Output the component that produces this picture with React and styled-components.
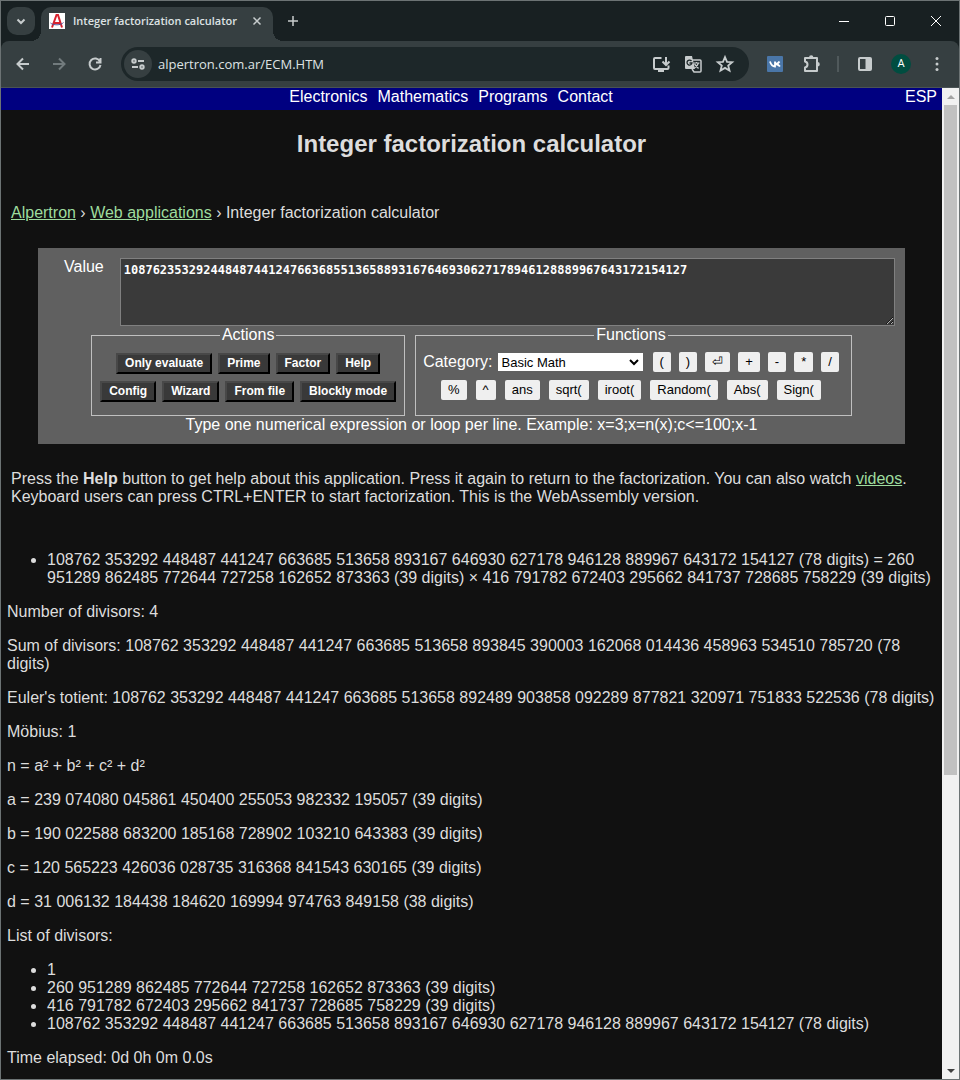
import React from "react";
import styled, { createGlobalStyle, css } from "styled-components";

const Global = createGlobalStyle`
  * { box-sizing: border-box; }
  body { margin: 0; background: #111; }
  button, select, textarea { margin: 0; }
  svg { flex: none; }
`;

const sans = `"Liberation Sans", Arial, sans-serif`;
const ui = `"Open Sans", "Noto Sans", sans-serif`;

const Frame = styled.div`
  display: flex;
  flex-direction: column;
  min-height: 100vh;
  border: 1px solid #6c7374;
  background: #111;
  font: 16px/18px ${sans};
  color: #ddd;
`;

const TabStrip = styled.div`
  display: flex;
  align-items: center;
  height: 40px;
  padding: 0 16px 0 6px;
  background: #182022;
`;

const IconButton = styled.button`
  display: flex;
  align-items: center;
  justify-content: center;
  flex: none;
  width: 28px;
  height: 28px;
  padding: 0;
  border: 0;
  border-radius: ${(p) => p.$radius || 14}px;
  background: ${(p) => p.$bg || "transparent"};
  color: ${(p) => p.$color || "#c7cccd"};
`;

const Tab = styled.div`
  position: relative;
  display: flex;
  align-items: center;
  align-self: flex-end;
  width: 232px;
  height: 34px;
  margin-left: 6px;
  margin-right: 6px;
  padding: 0 2px 6px 8px;
  border-radius: 10px 10px 0 0;
  background: #363f41;
  &::before, &::after {
    content: "";
    position: absolute;
    bottom: 0;
    width: 10px;
    height: 10px;
  }
  &::before {
    left: -10px;
    background: radial-gradient(circle at 0 0, transparent 10px, #363f41 10px);
  }
  &::after {
    right: -10px;
    background: radial-gradient(circle at 100% 0, transparent 10px, #363f41 10px);
  }
`;

const TabTitle = styled.span`
  flex: 1;
  margin-left: 8px;
  font: 600 11px/16px ${ui};
  color: #dde2e3;
  white-space: nowrap;
`;

const WindowControls = styled.div`
  display: flex;
  gap: 18px;
  margin-left: auto;
  margin-right: -7px;
`;

const Toolbar = styled.div`
  display: flex;
  align-items: center;
  height: 47px;
  padding: 0 8px;
  border-bottom: 1px solid #4a5355;
  border-radius: 8px 8px 0 0;
  background: #363f41;
`;

const ToolbarBack = styled.div`
  background: #182022;
`;

const NavButtons = styled.div`
  display: flex;
  gap: 8px;
  margin-right: 12px;
`;

const Omnibox = styled.div`
  display: flex;
  align-items: center;
  flex: 1;
  height: 34px;
  padding: 0 10px 0 3px;
  border-radius: 17px;
  background: #1d2729;
`;

const Address = styled.input`
  flex: 1;
  min-width: 0;
  margin-left: 6px;
  padding: 0;
  border: 0;
  outline: 0;
  background: transparent;
  font: 13px/20px ${ui};
  color: #dfe3e4;
`;

const BoxIcons = styled.div`
  display: flex;
  gap: 4px;
`;

const Extensions = styled.div`
  display: flex;
  align-items: center;
  gap: 8px;
  margin-left: 12px;
`;

const Divider = styled.span`
  width: 2px;
  height: 16px;
  margin: 0 4px;
  background: #50595b;
`;

const Avatar = styled.span`
  display: flex;
  align-items: center;
  justify-content: center;
  width: 20px;
  height: 20px;
  border-radius: 50%;
  background: #004d40;
  font: 11px/20px Roboto, sans-serif;
  color: #fff;
`;

const Viewport = styled.div`
  display: flex;
  flex: 1;
`;

const Page = styled.div`
  flex: 1;
  min-width: 0;
`;

const ScrollBar = styled.div`
  display: flex;
  flex-direction: column;
  flex: none;
  width: 17px;
  background: #f1f1f1;
`;

const ScrollArrow = styled.button`
  display: flex;
  align-items: center;
  justify-content: center;
  width: 17px;
  height: 17px;
  padding: 0;
  border: 0;
  background: transparent;
  color: ${(p) => (p.$off ? "#a3a3a3" : "#404040")};
`;

const Track = styled.div`
  flex: 1;
  padding: 0 2px;
`;

const Thumb = styled.div`
  height: 70%;
  background: #c1c1c1;
`;

const SiteNav = styled.nav`
  display: flex;
  height: 22px;
  padding-right: 5px;
  background: #000080;
`;

const NavList = styled.div`
  display: flex;
  flex: 1;
  justify-content: center;
  gap: 10px;
  padding-right: 4px;
`;

const NavLink = styled.a`
  color: #fff;
  text-decoration: none;
`;

const Title = styled.h1`
  margin: 20px 0 47px;
  font: bold 24px/27px ${sans};
  text-align: center;
`;

const Crumbs = styled.div`
  margin-left: 10px;
`;

const Link = styled.a`
  color: #9edc9e;
  text-decoration: underline;
`;

const Form = styled.form`
  margin: 26px 37px;
  padding: 10px 10px 10px 26px;
  background: #606060;
  color: #fff;
`;

const ValueRow = styled.div`
  display: flex;
  gap: 16px;
`;

const ValueBox = styled.textarea`
  display: block;
  flex: 1;
  height: 68px;
  padding: 4px 3px;
  border: 1px solid #808080;
  outline: 0;
  background: #3a3a3a;
  color: #fff;
  font: bold 12px/15px "DejaVu Sans Mono", monospace;
  resize: vertical;
`;

const Groups = styled.div`
  display: flex;
  justify-content: center;
  gap: 10px;
  padding-right: 16px;
`;

const Group = styled.fieldset`
  min-width: 0;
  height: 90px;
  margin: 0;
  padding: ${(p) => (p.$keys ? "8px 12px 0 7px" : "9px 8px 0")};
  border: 1px solid #c0c0c0;
`;

const Legend = styled.legend`
  margin: 0 auto;
  padding: 0 2px;
  text-align: center;
`;

const Row = styled.div`
  display: flex;
  align-items: center;
  justify-content: center;
  gap: ${(p) => p.$gap}px;
  height: 20px;
  margin-bottom: 8px;
`;

const buttonBase = css`
  font-family: ${sans};
  font-size: 13px;
  line-height: 16px;
  white-space: nowrap;
`;

const ActionButton = styled.button`
  ${buttonBase}
  height: 21px;
  padding: 0 7px;
  border: 2px solid;
  border-color: #484848 #000 #000 #484848;
  background: #393939;
  color: #fff;
  font-size: 12px;
  font-weight: bold;
`;

const KeyButton = styled.button`
  ${buttonBase}
  height: 20px;
  padding: 0 7px;
  border: 0;
  border-radius: 2px;
  background: #efefef;
  color: #000;
`;

const Category = styled.label`
  display: flex;
  align-items: center;
  gap: 5px;
  margin-right: 2px;
`;

const SelectWrap = styled.span`
  position: relative;
  display: flex;
  color: #000;
  svg { position: absolute; right: 4px; top: 5px; pointer-events: none; }
`;

const Select = styled.select`
  ${buttonBase}
  appearance: none;
  width: 145px;
  height: 18px;
  padding: 1px 4px 0;
  border: 0;
  border-radius: 0;
  background: #fff;
  color: #000;
`;

const Hint = styled.div`
  padding-right: 16px;
  text-align: center;
`;

const Intro = styled.p`
  margin: 0 10px 45px;
`;

const Results = styled.div`
  padding: 0 6px;
  p { margin: 16px 0; }
  ul { margin: 16px 0; padding-left: 40px; }
  p:last-child { margin-bottom: 10px; }
`;

function Icon({ size = 20, children, w = 2 }) {
  return (
    <svg width={size} height={size} viewBox={`0 0 ${size} ${size}`} fill="none" stroke="currentColor" strokeWidth={w} aria-hidden="true">
      {children}
    </svg>
  );
}

const Favicon = () => (
  <svg width="16" height="16" viewBox="0 0 16 16" aria-hidden="true">
    <rect width="16" height="16" fill="#fff" />
    <path d="M3 14.500L7.500 2h1.500L13 14.500M5 10h6.500" fill="none" stroke="#d8232f" strokeWidth="2" />
    <path d="M1.500 10C4 12.500 12 12.500 14.500 9.500" fill="none" stroke="#55539a" strokeWidth="1" />
  </svg>
);

const InstallIcon = () => (
  <Icon>
    <path d="M10.500 4H4Q3 4 3 5v9q0 1 1 1h12.500q1 0 1-1v-2.500M15 3v7M11.500 7.500L15 11l3.500-3.500" />
    <path d="M7 15h6v3H7z" fill="currentColor" stroke="none" />
  </Icon>
);

const TranslateIcon = () => (
  <svg width="20" height="20" viewBox="0 0 20 20" aria-hidden="true">
    <path d="M3 2h6l3 13H3q-1 0-1-1V3q0-1 1-1z" fill="#c7cccd" />
    <path d="M9 6h8q1 0 1 1v10q0 1-1 1h-6l-2-3" fill="none" stroke="#c7cccd" strokeWidth="1.500" />
    <path d="M8.500 7A2.500 2.500 0 1 0 9 9H6.500" fill="none" stroke="#1d2729" strokeWidth="1.300" />
    <path d="M10.500 9h6M13.500 8v1M15.500 9q-1 3-4 5M11.500 10l4 4.500" fill="none" stroke="#c7cccd" strokeWidth="1.200" />
  </svg>
);

const PuzzleIcon = () => (
  <svg width="20" height="20" viewBox="0 0 20 20" aria-hidden="true">
    <path d="M4 4h12v13H4v-3.500q2.500-.5 2.500-3T4 7.500z" fill="none" stroke="#c7cccd" strokeWidth="2" strokeLinejoin="round" />
    <path d="M8 3.500a2.200 2.200 0 0 1 4.400 0zM16.500 8a2.300 2.300 0 0 1 0 4.600z" fill="#c7cccd" />
  </svg>
);

const VkIcon = () => (
  <svg width="16" height="16" viewBox="0 0 16 16" aria-hidden="true">
    <rect width="16" height="16" rx="1" fill="#4a76a8" />
    <path d="M3 5.500q1.500 5 5 5v-5M8 8q3 0 4.500-2.500M8.500 8q3 .5 4.500 2.500" fill="none" stroke="#fff" strokeWidth="1.800" />
  </svg>
);

const actions = [
  ["Only evaluate", "Prime", "Factor", "Help"],
  ["Config", "Wizard", "From file", "Blockly mode"],
];
const keysTop = ["(", ")", "⏎", "+", "-", "*", "/"];
const keysBottom = ["%", "^", "ans", "sqrt(", "iroot(", "Random(", "Abs(", "Sign("];
const P1 = "260 951289 862485 772644 727258 162652 873363 (39 digits)";
const P2 = "416 791782 672403 295662 841737 728685 758229 (39 digits)";
const N = "108762 353292 448487 441247 663685 513658 893167 646930 627178 946128 889967 643172 154127 (78 digits)";
const facts = [
  "Number of divisors: 4",
  "Sum of divisors: 108762 353292 448487 441247 663685 513658 893845 390003 162068 014436 458963 534510 785720 (78 digits)",
  "Euler's totient: 108762 353292 448487 441247 663685 513658 892489 903858 092289 877821 320971 751833 522536 (78 digits)",
  "Möbius: 1",
  "n = a² + b² + c² + d²",
  "a = 239 074080 045861 450400 255053 982332 195057 (39 digits)",
  "b = 190 022588 683200 185168 728902 103210 643383 (39 digits)",
  "c = 120 565223 426036 028735 316368 841543 630165 (39 digits)",
  "d = 31 006132 184438 184620 169994 974763 849158 (38 digits)",
  "List of divisors:",
];

function Browser() {
  return (
    <>
      <TabStrip>
        <IconButton aria-label="Search tabs" $bg="#363f41" $radius={10}>
          <Icon size={12}><path d="M2.500 4.500L6 8l3.500-3.500" /></Icon>
        </IconButton>
        <Tab>
          <Favicon />
          <TabTitle>Integer factorization calculator</TabTitle>
          <IconButton aria-label="Close tab">
            <Icon size={10} w={1.5}><path d="M1.500 1.500l7 7M8.500 1.500l-7 7" /></Icon>
          </IconButton>
        </Tab>
        <IconButton aria-label="New tab">
          <Icon size={12} w={1.5}><path d="M6 1v10M1 6h10" /></Icon>
        </IconButton>
        <WindowControls>
          <IconButton aria-label="Minimize" $color="#fff"><Icon size={10} w={1}><path d="M0 5.500h10" /></Icon></IconButton>
          <IconButton aria-label="Maximize" $color="#fff"><Icon size={10} w={1}><rect x="0.500" y="0.500" width="9" height="9" rx="1" /></Icon></IconButton>
          <IconButton aria-label="Close" $color="#fff"><Icon size={10} w={1}><path d="M0 0l10 10M10 0L0 10" /></Icon></IconButton>
        </WindowControls>
      </TabStrip>
      <ToolbarBack>
        <Toolbar>
          <NavButtons>
            <IconButton aria-label="Back"><Icon size={16}><path d="M14 8H3M8 2.500L2.500 8 8 13.500" /></Icon></IconButton>
            <IconButton aria-label="Forward" $color="#727b7d"><Icon size={16}><path d="M2 8h11M8 2.500L13.500 8 8 13.500" /></Icon></IconButton>
            <IconButton aria-label="Reload"><Icon size={16}><path d="M13 5.500A5.500 5.500 0 1 0 13.500 9M13.500 2v4.500H9" /></Icon></IconButton>
          </NavButtons>
          <Omnibox>
            <IconButton aria-label="Site information" $bg="#363f41">
              <Icon size={14}><circle cx="3" cy="4" r="1.700" /><path d="M7 4h6M1 10h6" /><circle cx="11" cy="10" r="1.700" /></Icon>
            </IconButton>
            <Address aria-label="Address" defaultValue="alpertron.com.ar/ECM.HTM" />
            <BoxIcons>
              <IconButton aria-label="Install"><InstallIcon /></IconButton>
              <IconButton aria-label="Translate"><TranslateIcon /></IconButton>
              <IconButton aria-label="Bookmark">
                <Icon w={1.8}><path d="M10 3l2 4.800 5.200.4-4 3.400 1.300 5L10 13.900l-4.500 2.700 1.300-5-4-3.400L8 7.800z" /></Icon>
              </IconButton>
            </BoxIcons>
          </Omnibox>
          <Extensions>
            <IconButton aria-label="VK"><VkIcon /></IconButton>
            <IconButton aria-label="Extensions"><PuzzleIcon /></IconButton>
            <Divider />
            <IconButton aria-label="Side panel">
              <Icon size={16}><rect x="2" y="2" width="12" height="12" rx="1" /><path d="M8.500 2h5v12h-5z" fill="currentColor" stroke="none" /></Icon>
            </IconButton>
            <IconButton aria-label="Profile"><Avatar>A</Avatar></IconButton>
            <IconButton aria-label="Menu">
              <Icon size={16}><g fill="currentColor" stroke="none"><circle cx="8" cy="2.500" r="1.500" /><circle cx="8" cy="8" r="1.500" /><circle cx="8" cy="13.500" r="1.500" /></g></Icon>
            </IconButton>
          </Extensions>
        </Toolbar>
      </ToolbarBack>
    </>
  );
}

function Calculator() {
  return (
    <Form onSubmit={(e) => e.preventDefault()}>
      <ValueRow>
        <label htmlFor="value">Value</label>
        <ValueBox id="value" spellCheck={false} defaultValue="108762353292448487441247663685513658893167646930627178946128889967643172154127" />
      </ValueRow>
      <Groups>
        <Group>
          <Legend>Actions</Legend>
          {actions.map((row) => (
            <Row key={row[0]} $gap={6}>
              {row.map((a) => <ActionButton type="button" key={a}>{a}</ActionButton>)}
            </Row>
          ))}
        </Group>
        <Group $keys>
          <Legend>Functions</Legend>
          <Row $gap={8}>
            <Category>
              Category:
              <SelectWrap>
                <Select defaultValue="Basic Math"><option>Basic Math</option></Select>
                <Icon size={10}><path d="M1 2l4 4 4-4" /></Icon>
              </SelectWrap>
            </Category>
            {keysTop.map((k) => <KeyButton type="button" key={k}>{k}</KeyButton>)}
          </Row>
          <Row $gap={9}>
            {keysBottom.map((k) => <KeyButton type="button" key={k}>{k}</KeyButton>)}
          </Row>
        </Group>
      </Groups>
      <Hint>Type one numerical expression or loop per line. Example: x=3;x=n(x);c&lt;=100;x-1</Hint>
    </Form>
  );
}

export default function App() {
  return (
    <Frame>
      <Global />
      <Browser />
      <Viewport>
        <Page>
          <SiteNav>
            <NavList>
              {["Electronics", "Mathematics", "Programs", "Contact"].map((t) => <NavLink href="#" key={t}>{t}</NavLink>)}
            </NavList>
            <NavLink href="#">ESP</NavLink>
          </SiteNav>
          <Title>Integer factorization calculator</Title>
          <Crumbs>
            <Link href="#">Alpertron</Link> › <Link href="#">Web applications</Link> › Integer factorization calculator
          </Crumbs>
          <Calculator />
          <Intro>
            Press the <b>Help</b> button to get help about this application. Press it again to return to the factorization. You can also watch <Link href="#">videos</Link>. Keyboard users can press CTRL+ENTER to start factorization. This is the WebAssembly version.
          </Intro>
          <Results>
            <ul><li>{N} = {P1} × {P2}</li></ul>
            {facts.map((f) => <p key={f}>{f}</p>)}
            <ul>
              <li>1</li>
              <li>{P1}</li>
              <li>{P2}</li>
              <li>{N}</li>
            </ul>
            <p>Time elapsed: 0d 0h 0m 0.0s</p>
          </Results>
        </Page>
        <ScrollBar>
          <ScrollArrow aria-label="Scroll up" $off><svg width="8" height="4" viewBox="0 0 8 4"><path d="M0 4l4-4 4 4z" fill="currentColor" /></svg></ScrollArrow>
          <Track><Thumb /></Track>
          <ScrollArrow aria-label="Scroll down"><svg width="8" height="4" viewBox="0 0 8 4"><path d="M0 0l4 4 4-4z" fill="currentColor" /></svg></ScrollArrow>
        </ScrollBar>
      </Viewport>
    </Frame>
  );
}
